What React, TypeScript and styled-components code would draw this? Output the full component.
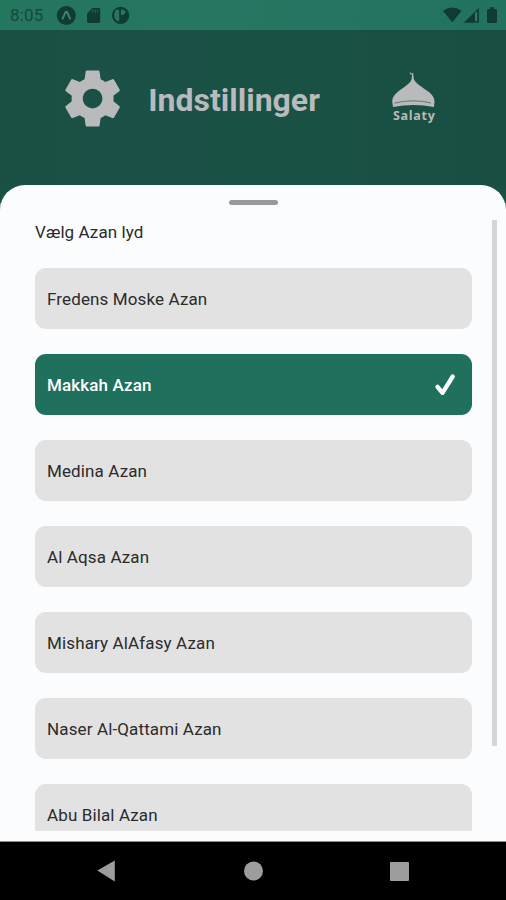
import React from "react";
import styled, { createGlobalStyle } from "styled-components";

const GlobalStyle = createGlobalStyle`
  * { box-sizing: border-box; }
  body { margin: 0; background: #000; font-family: Roboto, "Liberation Sans", sans-serif; }
`;

const Screen = styled.main`
  width: 506px;
  height: 900px;
  display: flex;
  flex-direction: column;
  overflow: hidden;
  background: linear-gradient(#1a5145 0 203px, #7d8280 203px);
`;

const StatusBar = styled.header`
  flex: 0 0 30px;
  display: flex;
  align-items: center;
  justify-content: space-between;
  background: linear-gradient(100deg, #24765f, #257762 45%, #217260);
  color: #0f3b31;
`;

const Clock = styled.time`
  width: 47px;
  padding-left: 10px;
  font-size: 17px;
  line-height: 31px;
  letter-spacing: 0.2px;
  color: #17483c;
`;

const StatusGroup = styled.div`
  display: flex;
  align-items: center;
  height: 30px;
`;

const Header = styled.section`
  flex: 0 0 155px;
  display: flex;
  align-items: flex-start;
  background: linear-gradient(90deg, #1a5044, #1b5146 35%, #1a5145 70%, #194d41);
  color: #b9babb;
`;

const GearIcon = styled.svg`
  flex: none;
  margin: 35px 0 0 59px;
`;

const Title = styled.h1`
  width: 243px;
  margin: 50px 0 0 22px;
  font-size: 32px;
  line-height: 40px;
  font-weight: 700;
  letter-spacing: 0;
`;

const Brand = styled.div`
  display: flex;
  flex-direction: column;
  align-items: center;
  width: 46px;
  margin-top: 39px;
`;

const BrandName = styled.span`
  font: 700 12.5px/14px "Open Sans", sans-serif;
  letter-spacing: 0.7px;
  margin-top: 1px;
  white-space: nowrap;
`;

const Sheet = styled.section`
  flex: 0 0 657px;
  display: flex;
  flex-direction: column;
  padding-top: 14.5px;
  border-radius: 25px 25px 0 0;
  border-bottom: 1px solid #8b8c8c;
  background: #fafcfd;
  color: #2b2b2b;
`;

const Handle = styled.div`
  flex: none;
  align-self: center;
  width: 49px;
  height: 5px;
  border-radius: 3px;
  background: #98999c;
`;

const SheetBody = styled.div`
  flex: none;
  display: flex;
  height: 611px;
  margin-top: 15.5px;
  overflow: hidden;
`;

const Content = styled.div`
  width: 437px;
  margin-left: 35px;
`;

const Label = styled.h2`
  margin: 0 0 23.5px;
  font-size: 17px;
  line-height: 24px;
  font-weight: 400;
  letter-spacing: 0.1px;
`;

const OptionList = styled.div`
  display: flex;
  flex-direction: column;
  gap: 25.1px;
`;

const Option = styled.button<{ $selected: boolean }>`
  flex: none;
  display: flex;
  align-items: center;
  justify-content: space-between;
  height: 61px;
  padding: 1px 15px 0 12px;
  border: 0;
  border-radius: 11px;
  background: ${({ $selected }) => ($selected ? "#1f705c" : "#e2e2e2")};
  color: ${({ $selected }) => ($selected ? "#fff" : "#2b2b2b")};
  font: ${({ $selected }) => ($selected ? 500 : 400)} 17px/24px Roboto, sans-serif;
  letter-spacing: 0.13px;
`;

const ScrollThumb = styled.div`
  width: 5px;
  height: 526px;
  margin-left: 20px;
  border-radius: 1px;
  background: #d5d6d7;
`;

const NavBar = styled.nav`
  flex: 1;
  display: grid;
  grid-template-columns: repeat(3, 146px);
  justify-content: center;
  align-items: center;
  justify-items: center;
  background: #000;
  color: #9d9d9d;
`;

const voices = [
  "Fredens Moske Azan",
  "Makkah Azan",
  "Medina Azan",
  "Al Aqsa Azan",
  "Mishary AlAfasy Azan",
  "Naser Al-Qattami Azan",
  "Abu Bilal Azan",
];

const Notifications = () => (
  <svg width="84" height="30" viewBox="47 0 84 30" fill="currentColor">
    <circle cx="66.3" cy="15.5" r="9.5" />
    <path d="M62.6 18.7 65.2 12.8q1.1-2 2.2 0l2.7 5.9" fill="none" stroke="#398a72" strokeWidth="1.9" strokeLinecap="round" />
    <path d="M87 13.5 92.5 8h6.3q1.4 0 1.4 1.4v12.2q0 1.4-1.4 1.4H88.4Q87 23 87 21.6Z" />
    <path d="M92.8 9.6v3M95.3 9.6v3M97.8 9.6v3" stroke="#246d59" />
    <circle cx="120.6" cy="15.4" r="8.6" />
    <path d="M116 9.7h3.2v11.8q-4.7-1-5-6Q114.2 11.5 116 9.7Zm5 0h1.5q2.9.3 2.9 2.6 0 2.2-2.9 2.7H121Z" fill="#287661" />
  </svg>
);

const DeviceStatus = () => (
  <svg width="68" height="30" viewBox="438 0 68 30" fill="currentColor">
    <path d="M443 11q9.4-6.8 18.5 0l-9.2 11.2Z" />
    <path d="M463.6 22.8 478.9 8v14.8Z" />
    <path d="M475 13.2v8h2.2v-10Z" fill="#347c69" />
    <path d="M489.8 7.2h4.2V9h1.5q1.5 0 1.5 1.5v11q0 1.5-1.5 1.5h-7q-1.5 0-1.5-1.5v-11q0-1.5 1.5-1.5h1.3Z" />
  </svg>
);

const Gear = () => (
  <GearIcon width="67.2" height="67.2" viewBox="0 0 24 24" fill="currentColor">
    <path d="M19.43 12.98c.04-.32.07-.64.07-.98s-.03-.66-.07-.98l2.11-1.65c.19-.15.24-.42.12-.64l-2-3.46c-.12-.22-.39-.3-.61-.22l-2.49 1c-.52-.4-1.08-.73-1.69-.98l-.38-2.65C14.46 2.18 14.25 2 14 2h-4c-.25 0-.46.18-.49.42l-.38 2.65c-.61.25-1.17.59-1.69.98l-2.49-1c-.23-.09-.49 0-.61.22l-2 3.46c-.13.22-.07.49.12.64l2.11 1.65c-.04.32-.07.65-.07.98s.03.66.07.98l-2.11 1.65c-.19.15-.24.42-.12.64l2 3.46c.12.22.39.3.61.22l2.49-1c.52.4 1.08.73 1.69.98l.38 2.65c.03.24.24.42.49.42h4c.25 0 .46-.18.49-.42l.38-2.65c.61-.25 1.17-.59 1.69-.98l2.49 1c.23.09.49 0 .61-.22l2-3.46c.12-.22.07-.49-.12-.64l-2.11-1.65zM12 15.5c-1.93 0-3.5-1.57-3.5-3.5s1.57-3.5 3.5-3.5 3.5 1.57 3.5 3.5-1.57 3.5-3.5 3.5z" />
  </GearIcon>
);

const Dome = () => (
  <svg width="46" height="39" viewBox="0 0 46 39" fill="currentColor">
    <path d="M19.8 1q-1.6 2.3.5 3.4 1.7.4 2.1-1.1.4 2.8-2 2.500-3-1.200-.6-4.800Z" />
    <path d="M21.200 5h1l.7 5.500q1.500 2.800 4.700 5.300C34 20.900 43.500 24.500 43.500 32.500L43 38Q22.500 34 2 38L1.200 32.500C1.200 25 10 21 16.200 15.800q3.900-2.900 4.400-5.300Z" />
    <path d="M3.500 34.200Q12 31.800 22 31.800T40 34" fill="none" stroke="#55736b" strokeWidth=".9" />
  </svg>
);

const Check = () => (
  <svg width="24" height="26" viewBox="0 0 24 26" fill="none" stroke="currentColor" strokeWidth="4.3" strokeLinecap="round" strokeLinejoin="round">
    <path d="m4.500 14.800 5 6L19.700 4.500" />
  </svg>
);

export default function App() {
  return (
    <>
      <GlobalStyle />
      <Screen>
        <StatusBar>
          <StatusGroup><Clock>8:05</Clock><Notifications /></StatusGroup>
          <DeviceStatus />
        </StatusBar>
        <Header>
          <Gear />
          <Title>Indstillinger</Title>
          <Brand><Dome /><BrandName>Salaty</BrandName></Brand>
        </Header>
        <Sheet>
          <Handle />
          <SheetBody>
            <Content>
              <Label>Vælg Azan lyd</Label>
              <OptionList>
                {voices.map((voice, i) => (
                  <Option key={voice} $selected={i === 1}>
                    {voice}
                    {i === 1 && <Check />}
                  </Option>
                ))}
              </OptionList>
            </Content>
            <ScrollThumb />
          </SheetBody>
        </Sheet>
        <NavBar>
          <svg width="20" height="22" viewBox="0 0 20 22" fill="currentColor"><path d="M.3 10.5 17.8.5v21Z" /></svg>
          <svg width="20" height="20" viewBox="0 0 20 20" fill="currentColor"><circle cx="10.5" cy="10" r="9.5" /></svg>
          <svg width="20" height="20" viewBox="0 0 20 20" fill="currentColor"><rect x="1" y="1" width="19" height="19" rx="1" /></svg>
        </NavBar>
      </Screen>
    </>
  );
}
